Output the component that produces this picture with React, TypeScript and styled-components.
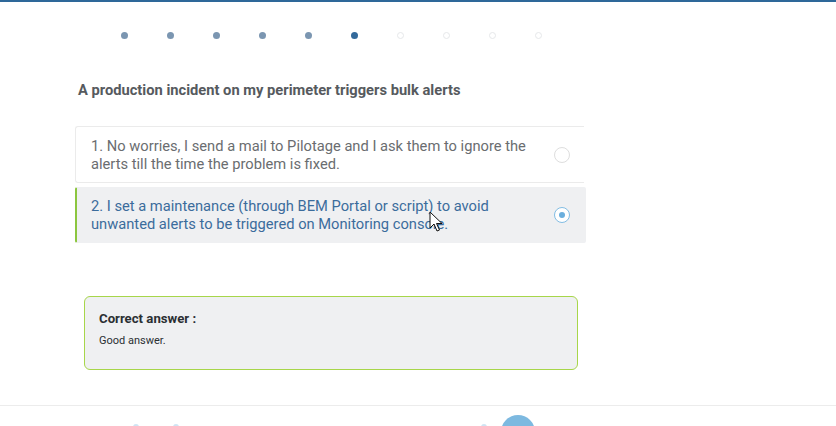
import React from "react";
import styled, { createGlobalStyle } from "styled-components";

const Global = createGlobalStyle`
  html, body { margin: 0; padding: 0; background: #fff; }
  body { font-family: Roboto, "Liberation Sans", Arial, sans-serif; width: 836px; height: 426px; overflow: hidden; }
  * { box-sizing: border-box; }
`;

const Page = styled.div`
  position: relative;
  width: 836px;
  height: 426px;
  border-top: 2px solid #2e6899;
  overflow: hidden;
`;

const Stepper = styled.div`
  display: flex;
  gap: 39px;
  padding: 30px 0 0 121px;
  height: 37px;
`;

const Dot = styled.span<{ $state: "done" | "active" | "todo" }>`
  display: block;
  width: 7px;
  height: 7px;
  border-radius: 50%;
  background: ${(p) => (p.$state === "done" ? "#7b96b1" : p.$state === "active" ? "#336a9b" : "#fff")};
  border: ${(p) => (p.$state === "todo" ? "1px solid #e6e8ea" : "none")};
`;

const Content = styled.div`
  padding-left: 75px;
  width: 586px;
  box-sizing: content-box;
`;

const Question = styled.h2`
  margin: 43px 0 0 3px;
  font-size: 14.7px;
  line-height: 17px;
  font-weight: 700;
  color: #565a5e;
`;

const Options = styled.div`
  display: flex;
  flex-direction: column;
  gap: 4px;
  margin-top: 27px;
`;

const Option = styled.div<{ $selected?: boolean }>`
  display: flex;
  align-items: center;
  justify-content: space-between;
  width: ${(p) => (p.$selected ? "511px" : "509px")};
  height: ${(p) => (p.$selected ? "56px" : "57px")};
  padding: ${(p) => (p.$selected ? "0 15px 0 14px" : "0 14px 0 15px")};
  background: ${(p) => (p.$selected ? "#eff0f2" : "#fff")};
  border: 1px solid ${(p) => (p.$selected ? "#eff0f2" : "#ebebeb")};
  border-right: ${(p) => (p.$selected ? "1px solid #eff0f2" : "none")};
  border-left: ${(p) => (p.$selected ? "2px solid #8cc63f" : "1px solid #ebebeb")};
  border-radius: ${(p) => (p.$selected ? "2px" : "3px 0 0 3px")};
`;

const OptionText = styled.div<{ $selected?: boolean }>`
  font-size: 14.7px;
  line-height: 18px;
  color: ${(p) => (p.$selected ? "#3b6c9c" : "#6a6d70")};
  max-width: 448px;
`;

const Radio = styled.span<{ $selected?: boolean }>`
  flex: none;
  position: relative;
  width: 16px;
  height: 16px;
  border-radius: 50%;
  border: 1px solid ${(p) => (p.$selected ? "#82bde4" : "#dedede")};
  background: #fff;
  &::after {
    content: "";
    display: ${(p) => (p.$selected ? "block" : "none")};
    position: absolute;
    left: 50%;
    top: 50%;
    width: 6px;
    height: 6px;
    margin: -3px 0 0 -3px;
    border-radius: 50%;
    background: #6aaedd;
  }
`;

const Feedback = styled.div`
  margin: 53px 0 0 9px;
  width: 494px;
  height: 74px;
  border: 1px solid #a7d64a;
  border-radius: 6px;
  background: #eff0f2;
  padding: 14px 14px;
`;

const FeedbackTitle = styled.div`
  font-size: 13.2px;
  line-height: 16px;
  font-weight: 700;
  color: #2b2f33;
`;

const FeedbackBody = styled.div`
  margin-top: 7px;
  font-size: 11px;
  line-height: 13px;
  color: #2b2f33;
`;

const Footer = styled.div`
  margin-top: 35px;
  border-top: 1px solid #ececec;
  height: 30px;
`;

const FooterBits = styled.div`
  display: flex;
  align-items: flex-start;
  padding: 9px 0 0 133px;
  height: 30px;
`;

const Faint = styled.span<{ $w: number }>`
  display: block;
  margin-top: 9px;
  width: ${(p) => p.$w}px;
  height: 6px;
  background: #cfe4f3;
  border-radius: 3px 3px 0 0;
`;

const Spacer = styled.span<{ $w: number }>`
  display: block;
  width: ${(p) => p.$w}px;
`;

const Fab = styled.span`
  display: block;
  width: 34px;
  height: 34px;
  border-radius: 50%;
  background: #7db9e0;
`;

const Cursor = styled.svg`
  position: absolute;
  left: 429px;
  top: 209px;
`;

const steps: ("done" | "active" | "todo")[] = [
  "done", "done", "done", "done", "done", "active", "todo", "todo", "todo", "todo",
];

export default function App() {
  return (
    <>
      <Global />
      <Page>
        <Stepper>
          {steps.map((s, i) => (
            <Dot key={i} $state={s} />
          ))}
        </Stepper>
        <Content>
          <Question>A production incident on my perimeter triggers bulk alerts</Question>
          <Options>
            <Option>
              <OptionText>
                1. No worries, I send a mail to Pilotage and I ask them to ignore the alerts till the time the problem is fixed.
              </OptionText>
              <Radio />
            </Option>
            <Option $selected>
              <OptionText $selected>
                2. I set a maintenance (through BEM Portal or script) to avoid unwanted alerts to be triggered on Monitoring console.
              </OptionText>
              <Radio $selected />
            </Option>
          </Options>
          <Feedback>
            <FeedbackTitle>Correct answer :</FeedbackTitle>
            <FeedbackBody>Good answer.</FeedbackBody>
          </Feedback>
        </Content>
        <Footer>
          <FooterBits>
            <Faint $w={6} />
            <Spacer $w={34} />
            <Faint $w={6} />
            <Spacer $w={302} />
            <Faint $w={6} />
            <Spacer $w={14} />
            <Fab />
          </FooterBits>
        </Footer>
        <Cursor width="14" height="22" viewBox="0 0 14 22">
          <path d="M1 1 L1 17 L5 13 L8 20 L10.5 19 L7.5 12.5 L13 12.5 Z" fill="#fff" stroke="#111" strokeWidth="1" strokeLinejoin="round" />
        </Cursor>
      </Page>
    </>
  );
}
